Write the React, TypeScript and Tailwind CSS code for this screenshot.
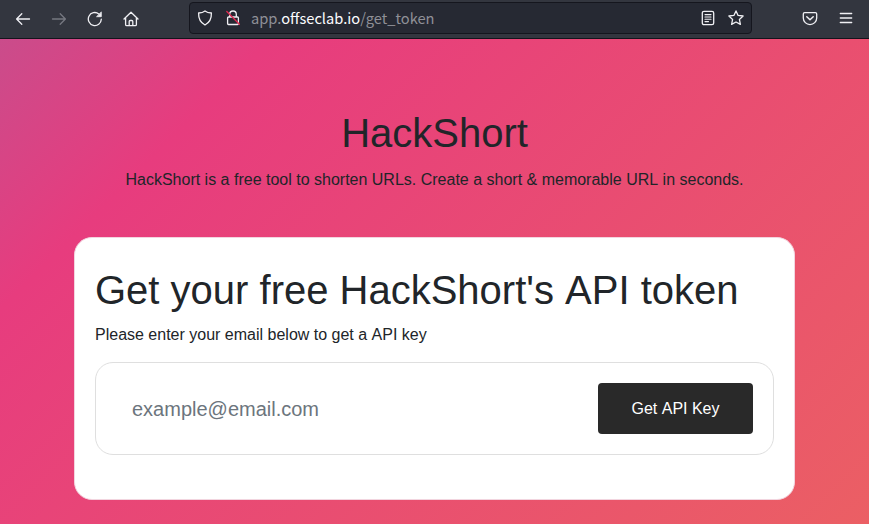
import type { ReactNode } from "react";

function Icon({ children, className = "" }: { children: ReactNode; className?: string }) {
  return (
    <svg
      width="16"
      height="16"
      viewBox="0 0 16 16"
      fill="none"
      stroke="currentColor"
      strokeWidth="1.3"
      strokeLinecap="round"
      strokeLinejoin="round"
      className={`shrink-0 ${className}`}
    >
      {children}
    </svg>
  );
}

function Toolbar() {
  return (
    <header className="flex h-[39px] items-start border-b border-[#14141c] bg-[#33363f] pt-0.5 text-[#f0f0f4]">
      <nav className="flex h-[33px] w-[189px] shrink-0 items-center gap-5 pl-[15px]">
        <Icon>
          <path d="M14.500 8H1.800M6.800 2.800 1.600 8l5.200 5.200" />
        </Icon>
        <Icon className="text-[#767880]">
          <path d="M1.500 8h12.700M9.200 2.800 14.400 8l-5.200 5.200" />
        </Icon>
        <Icon>
          <path d="M11.800 2.900a6.500 6.500 0 1 0 2.500 5.300" />
          <path d="M14.300 1.300v4.400H9.900z" fill="currentColor" strokeWidth="0.800" />
        </Icon>
        <Icon>
          <path d="M1 8 8 1.200 15 8M2.600 6.700v6.700c0 .7.500 1.200 1.200 1.200h8.400c.7 0 1.200-.5 1.200-1.200V6.700M6.200 14.500v-4c0-.6.4-1 1-1h1.600c.6 0 1 .4 1 1v4" />
        </Icon>
      </nav>
      <div className="flex h-[32px] w-[563px] shrink-0 items-center rounded-[4px] border border-[#15161e] bg-[#262933] px-[7px]">
        <Icon>
          <path d="M8 .9c1.700 1.400 3.900 2 6.400 2.100.2 5.500-1.400 9.300-6.400 12C3 12.300 1.400 8.500 1.600 3 4.100 2.900 6.300 2.300 8 .9z" />
        </Icon>
        <Icon className="ml-3">
          <path d="M4.700 7V4.300a3.300 3.300 0 0 1 6.600 0V7M3.500 7h9c.5 0 .9.400.9.900v5.700c0 .5-.4.900-.9.900h-9a.9.900 0 0 1-.9-.9V7.900c0-.5.4-.9.900-.9z" />
          <path d="M1.800 1.500 14.400 14.300" stroke="#e22850" />
        </Icon>
        <span className="ml-[10px] flex-1 font-['Noto_Sans_CJK_SC','Noto_Sans',sans-serif] text-[14.667px] leading-5 text-[#8f9097] [font-kerning:normal]">
          app.<span className="text-[#fbfbfe]">offseclab.io</span>/get_token
        </span>
        <Icon>
          <rect x="2.300" y="1.300" width="11.400" height="13.400" rx="1.700" />
          <path d="M5 4.600h6M5 7h6M5 9.300h6M5 11.600h3.500" strokeWidth="1.100" />
        </Icon>
        <Icon className="ml-3">
          <path d="m8 .9 2.100 4.500 5 .6-3.700 3.400 1 5L8 12l-4.400 2.400 1-5L.900 6l5-.6z" />
        </Icon>
      </div>
      <div className="flex h-[33px] flex-1 items-center justify-end gap-5 pr-[15px]">
        <Icon>
          <path d="M2.700 1.700h10.600c.8 0 1.400.6 1.400 1.400v3.800a6.700 6.700 0 0 1-13.400 0V3.100c0-.8.600-1.400 1.400-1.400z" />
          <path d="M4.800 5.700 8 8.700l3.200-3" strokeWidth="1.500" />
        </Icon>
        <Icon>
          <path d="M2.300 2.500h11.400M2.300 7h11.400M2.300 11.500h11.400" />
        </Icon>
      </div>
    </header>
  );
}

export default function App() {
  return (
    <div className="flex h-[524px] w-[869px] flex-col overflow-hidden font-['Liberation_Sans',Arial,sans-serif] text-base text-[#212529] [font-kerning:none]">
      <Toolbar />
      <main className="flex-1 bg-[linear-gradient(135deg,#ca4c8b_0%,#e73c7e_20%,#eb5f64_100%)] px-[74px] pt-[70px]">
        <div className="text-center">
          <h1 className="text-[40px] leading-[48px]">HackShort</h1>
          <p className="mt-[11px] leading-6">
            HackShort is a free tool to shorten URLs. Create a short &amp; memorable URL in seconds.
          </p>
        </div>
        <section className="mt-[45px] h-[263px] w-[721px] rounded-[18px] border border-[#f2d5df] bg-white px-5 pt-7">
          <h2 className="text-[40px] leading-[48px] whitespace-nowrap">Get your free HackShort's API token</h2>
          <p className="mt-[9px] leading-6">Please enter your email below to get a API key</p>
          <form className="mt-[15px] flex h-[93px] items-center rounded-[18px] border border-[#dfdfdf] pr-5 pl-9">
            <input
              type="email"
              placeholder="example@email.com"
              className="h-12 min-w-0 flex-1 pt-0.5 text-xl outline-none placeholder:text-[#6c757d]"
            />
            <button type="button" className="h-[51px] w-[155px] rounded-[4px] bg-[#292929] text-white">
              Get API Key
            </button>
          </form>
        </section>
      </main>
    </div>
  );
}
